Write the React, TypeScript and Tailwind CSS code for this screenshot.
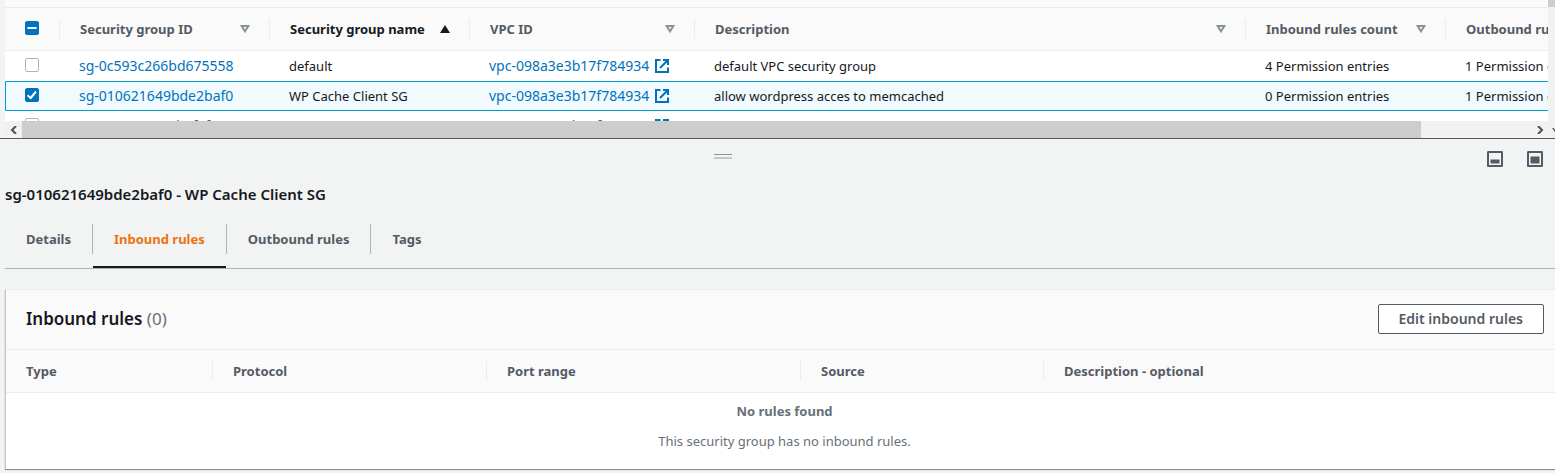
import React, { useEffect, useRef } from "react";

type SortState = "none" | "asc" | null;

const columns: { label: string; sort: SortState; width: string }[] = [
  { label: "Security group ID", sort: "none", width: "w-[210px]" },
  { label: "Security group name", sort: "asc", width: "w-[200px]" },
  { label: "VPC ID", sort: "none", width: "w-[225px]" },
  { label: "Description", sort: "none", width: "" },
  { label: "Inbound rules count", sort: "none", width: "w-[200px]" },
  { label: "Outbound rules count", sort: null, width: "w-[223px]" },
];

const groups = [
  {
    id: "sg-0c593c266bd675558",
    name: "default",
    vpc: "vpc-098a3e3b17f784934",
    description: "default VPC security group",
    inbound: "4 Permission entries",
    outbound: "1 Permission entry",
    selected: false,
  },
  {
    id: "sg-010621649bde2baf0",
    name: "WP Cache Client SG",
    vpc: "vpc-098a3e3b17f784934",
    description: "allow wordpress acces to memcached",
    inbound: "0 Permission entries",
    outbound: "1 Permission entry",
    selected: true,
  },
  {
    id: "sg-0ac6e3a9c7b2faf0c",
    name: "wp-cache",
    vpc: "vpc-098a3e3b17f784934",
    description: "memcached",
    inbound: "",
    outbound: "",
    selected: false,
  },
];

const tabs = ["Details", "Inbound rules", "Outbound rules", "Tags"];

const ruleColumns = [
  { label: "Type", width: "w-[207px]" },
  { label: "Protocol", width: "w-[274px]" },
  { label: "Port range", width: "w-[314px]" },
  { label: "Source", width: "w-[243px]" },
  { label: "Description - optional", width: "" },
];

function Checkbox({ label, checked = false, mixed = false }: { label: string; checked?: boolean; mixed?: boolean }) {
  const ref = useRef<HTMLInputElement>(null);
  useEffect(() => {
    if (ref.current) ref.current.indeterminate = mixed;
  }, [mixed]);
  return (
    <span className="grid size-[14px]">
      <input
        ref={ref}
        type="checkbox"
        aria-label={label}
        defaultChecked={checked}
        className="peer col-start-1 row-start-1 size-[14px] appearance-none rounded-xs border border-[#aab7b8] bg-white checked:border-[#0073bb] checked:bg-[#0073bb] indeterminate:border-[#0073bb] indeterminate:bg-[#0073bb]"
      />
      <svg
        viewBox="0 0 14 14"
        className="pointer-events-none col-start-1 row-start-1 hidden size-[14px] peer-checked:block peer-indeterminate:block"
        fill="none"
        stroke="#fff"
        strokeWidth="2"
      >
        {mixed ? <path d="M2.5 7h9" /> : <path d="M2.5 7.2 5.7 10 11 3.5" />}
      </svg>
    </span>
  );
}

function SortIcon({ state }: { state: SortState }) {
  if (state === "asc") {
    return (
      <svg viewBox="0 0 10 8" className="h-2 w-[10px] shrink-0" fill="#16191f">
        <path d="M5 0 10 8H0z" />
      </svg>
    );
  }
  return (
    <svg viewBox="0 0 10 8" className="h-2 w-[10px] shrink-0" fill="none" stroke="#879596" strokeWidth="2">
      <path d="M1.6 1h6.8L5 6.4z" />
    </svg>
  );
}

function ExternalIcon() {
  return (
    <svg viewBox="0 0 14 14" className="size-[14px] shrink-0" fill="none" stroke="#0073bb" strokeWidth="2">
      <path d="M5.5 1H1v12h12V8.5M8 1h5v5M12.5 1.5 5 9" />
    </svg>
  );
}

function Chevron({ d }: { d: string }) {
  return (
    <svg viewBox="0 0 8 8" className="size-2" fill="none" stroke="#505050" strokeWidth="2">
      <path d={d} />
    </svg>
  );
}

function PanelIcon({ full = false }: { full?: boolean }) {
  return (
    <svg viewBox="0 0 16 16" className="size-4" fill="none" stroke="#545b64" strokeWidth="2">
      <rect x="1" y="1" width="14" height="14" rx="0.3" />
      {full ? (
        <rect x="3.5" y="5.5" width="9" height="7" fill="#545b64" stroke="none" />
      ) : (
        <rect x="3.5" y="8.5" width="9" height="4" fill="#545b64" stroke="none" />
      )}
    </svg>
  );
}

export default function App() {
  return (
    <div className="min-h-screen bg-[#f2f3f3] font-['Noto_Sans',sans-serif] text-[13px] leading-5 text-[#16191f]">
      <section className="border-b border-[#545b64] pl-[5px]">
        <div className="flex h-[121px]">
          <div className="min-w-0 flex-1 overflow-hidden bg-white">
            <div className="h-2 border-b border-[#eaeded] bg-[#fafafa]" />
            <table className="w-full min-w-[1664px] table-fixed border-separate border-spacing-0 text-left">
              <thead className="bg-[#fafafa] text-[#545b64]">
                <tr className="h-[43px]">
                  <th className="w-[55px] border-b border-[#eaeded] p-0">
                    <div className="flex h-5 items-center border-r border-[#eaeded] pb-0.5 pl-5">
                      <Checkbox label="Select all" mixed />
                    </div>
                  </th>
                  {columns.map((c) => (
                    <th key={c.label} className={`${c.width} border-b border-[#eaeded] p-0 font-bold`}>
                      <div
                        className={`flex h-5 items-center justify-between border-r border-[#eaeded] pr-[19px] pl-5 ${
                          c.sort === "asc" ? "text-[#16191f]" : ""
                        }`}
                      >
                        <span className="whitespace-nowrap">{c.label}</span>
                        {c.sort && <SortIcon state={c.sort} />}
                      </div>
                    </th>
                  ))}
                </tr>
              </thead>
              <tbody>
                {groups.map((g) => (
                  <tr
                    key={g.id}
                    className={
                      g.selected
                        ? "h-[30px] bg-[#f1faff] outline outline-1 -outline-offset-1 outline-[#00a1c9]"
                        : "h-[30px]"
                    }
                  >
                    <td className="p-0 pb-0.5 pl-5">
                      <Checkbox label={`Select ${g.id}`} checked={g.selected} />
                    </td>
                    <td className="p-0 pl-[19px]">
                      <a href="#group" className="block text-sm leading-5 text-[#0073bb]">
                        {g.id}
                      </a>
                    </td>
                    <td className="p-0 pl-[19px]">{g.name}</td>
                    <td className="p-0 pl-[19px]">
                      <a href="#vpc" className="flex items-center gap-1.5 text-sm leading-5 text-[#0073bb]">
                        {g.vpc}
                        <ExternalIcon />
                      </a>
                    </td>
                    <td className="p-0 pl-[19px]">{g.description}</td>
                    <td className="p-0 pl-[19px]">{g.inbound}</td>
                    <td className="p-0 pl-[19px]">{g.outbound}</td>
                  </tr>
                ))}
              </tbody>
            </table>
          </div>
          <div className="w-[7px] bg-[#f1f1f1]">
            <div className="h-[7px] bg-[#cdcdcd]" />
          </div>
        </div>
        <div className="flex h-[17px] items-stretch bg-[#f1f1f1]">
          <div className="grid w-[17px] place-items-center">
            <Chevron d="M6 0 2 4l4 4" />
          </div>
          <div className="flex-1">
            <div className="h-full w-[92.7%] bg-[#cdcdcd]" />
          </div>
          <div className="grid w-[17px] place-items-center">
            <Chevron d="M2 0l4 4-4 4" />
          </div>
          <div className="flex w-[7px] items-center justify-end overflow-hidden">
            <svg viewBox="0 0 3 4" className="h-1 w-[3px]" fill="#505050">
              <path d="M0 0h1.5L3 1.5V4z" />
            </svg>
          </div>
        </div>
      </section>

      <section className="pl-[5px]">
        <div className="flex h-10 items-center pr-3">
          <div className="flex flex-1 justify-center pb-1.5">
            <button type="button" aria-label="Resize panel" className="flex w-[18px] flex-col gap-0.5">
              <span className="h-px w-full bg-[#879596]" />
              <span className="h-0.5 w-full bg-[#c3c8c8]" />
            </button>
          </div>
          <div className="flex gap-6 pl-[46px]">
            <button type="button" aria-label="Half-height panel">
              <PanelIcon />
            </button>
            <button type="button" aria-label="Full-height panel">
              <PanelIcon full />
            </button>
          </div>
        </div>

        <h2 className="pt-[5px] text-[15px] leading-5 font-semibold">sg-010621649bde2baf0 - WP Cache Client SG</h2>

        <nav role="tablist" className="mt-5 flex h-[45px] border-b border-[#aab7b8] font-bold text-[#545b64]">
          {tabs.map((t, i) => {
            const active = t === "Inbound rules";
            return (
              <div key={t} className="flex">
                <button
                  type="button"
                  role="tab"
                  aria-selected={active}
                  className={`flex items-start border-b-2 px-[21px] pt-[5px] ${
                    active ? "border-[#16191f] text-[#ec7211]" : "border-transparent"
                  }`}
                >
                  {t}
                </button>
                {i < tabs.length - 1 && <span className="h-[30px] w-px bg-[#aab7b8]" />}
              </div>
            );
          })}
        </nav>

        <div className="mt-5 border-t border-l border-t-[#eaeded] border-l-[#c0c8c8] bg-white shadow-[0_1px_1px_0_#879596]">
          <header className="flex h-[60px] items-center justify-between border-b border-[#eaeded] bg-[#fafafa] pr-[11px] pb-0.5 pl-5">
            <h3 className="text-[17px] leading-6 font-semibold">
              Inbound rules <span className="font-normal text-[#687078]">(0)</span>
            </h3>
            <button
              type="button"
              className="h-[30px] rounded-xs border border-[#545b64] bg-white px-5 text-sm font-semibold text-[#545b64]"
            >
              Edit inbound rules
            </button>
          </header>
          <table className="w-full table-fixed border-separate border-spacing-0 text-left">
            <thead className="bg-[#fafafa] text-[#545b64]">
              <tr className="h-[43px]">
                {ruleColumns.map((c, i) => (
                  <th key={c.label} className={`${c.width} border-b border-[#eaeded] p-0 font-bold`}>
                    <div className={`h-5 pl-5 ${i < ruleColumns.length - 1 ? "border-r border-[#eaeded]" : ""}`}>
                      {c.label}
                    </div>
                  </th>
                ))}
              </tr>
            </thead>
            <tbody>
              <tr>
                <td colSpan={5} className="h-[76px] p-0 pl-2 text-center align-top text-[#687078]">
                  <p className="pt-2 font-bold">No rules found</p>
                  <p className="pt-2.5">This security group has no inbound rules.</p>
                </td>
              </tr>
            </tbody>
          </table>
        </div>
      </section>
    </div>
  );
}
